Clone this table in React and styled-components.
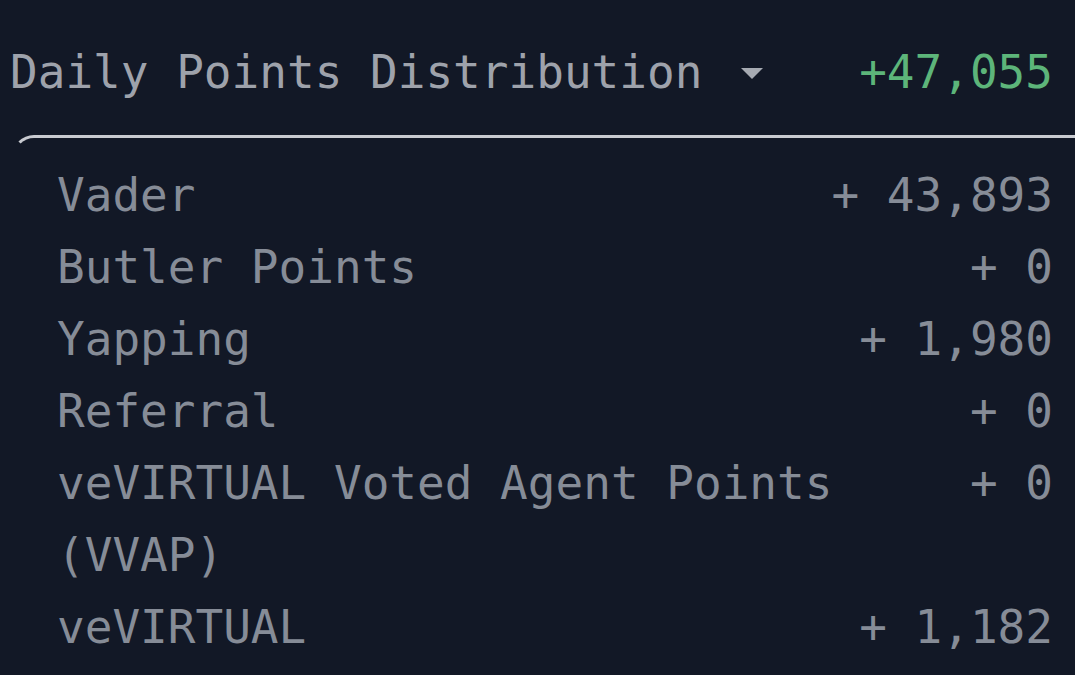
import React from 'react';
import styled, { createGlobalStyle } from 'styled-components';

const GlobalStyle = createGlobalStyle`
    html, body {
        margin: 0;
        padding: 0;
        background: #121826;
        overflow: hidden;
    }
`;

const Page = styled.div`
    width: 1075px;
    height: 675px;
    background: #121826;
    font-family: "DejaVu Sans Mono", "Liberation Mono", monospace;
    font-size: 46px;
    line-height: 72px;
    box-sizing: border-box;
    padding: 36px 22px 0 6px;
    overflow: hidden;
`;

const Header = styled.div`
    display: flex;
    justify-content: space-between;
    align-items: center;
    margin-bottom: 27px;
    padding-left: 4px;
`;

const TitleBox = styled.div`
    display: flex;
    align-items: center;
    gap: 38px;
    color: #9ea2ab;
    white-space: nowrap;
`;

const Caret = styled.svg`
    width: 24px;
    height: 12px;
    fill: #a6aab2;
    margin-top: 4px;
`;

const Total = styled.div`
    color: #5db57a;
`;

const Card = styled.div`
    margin-left: 6px;
    margin-right: -40px;
    border-top: 3px solid #c8cad0;
    border-left: 3px solid transparent;
    border-top-left-radius: 22px;
    padding: 21px 40px 0 42px;
`;

const Row = styled.div`
    display: flex;
    justify-content: space-between;
    align-items: flex-start;
    gap: 24px;
    color: #868c97;
`;

const Label = styled.div``;

const Value = styled.div`
    white-space: pre;
    flex-shrink: 0;
`;

const rows = [
    { label: 'Vader', value: '43,893' },
    { label: 'Butler Points', value: '0' },
    { label: 'Yapping', value: '1,980' },
    { label: 'Referral', value: '0' },
    { label: 'veVIRTUAL Voted Agent Points (VVAP)', value: '0' },
    { label: 'veVIRTUAL', value: '1,182' },
];

const App = () => {
    return (
        <>
            <GlobalStyle />
            <Page>
                <Header>
                    <TitleBox>
                        <span>Daily Points Distribution</span>
                        <Caret viewBox="0 0 24 12">
                            <path d="M1 0 L23 0 L12 11 Z" />
                        </Caret>
                    </TitleBox>
                    <Total>+47,055</Total>
                </Header>
                <Card>
                    {rows.map((row) => (
                        <Row key={row.label}>
                            <Label>{row.label}</Label>
                            <Value>{'+ ' + row.value}</Value>
                        </Row>
                    ))}
                </Card>
            </Page>
        </>
    );
};

export default App;
